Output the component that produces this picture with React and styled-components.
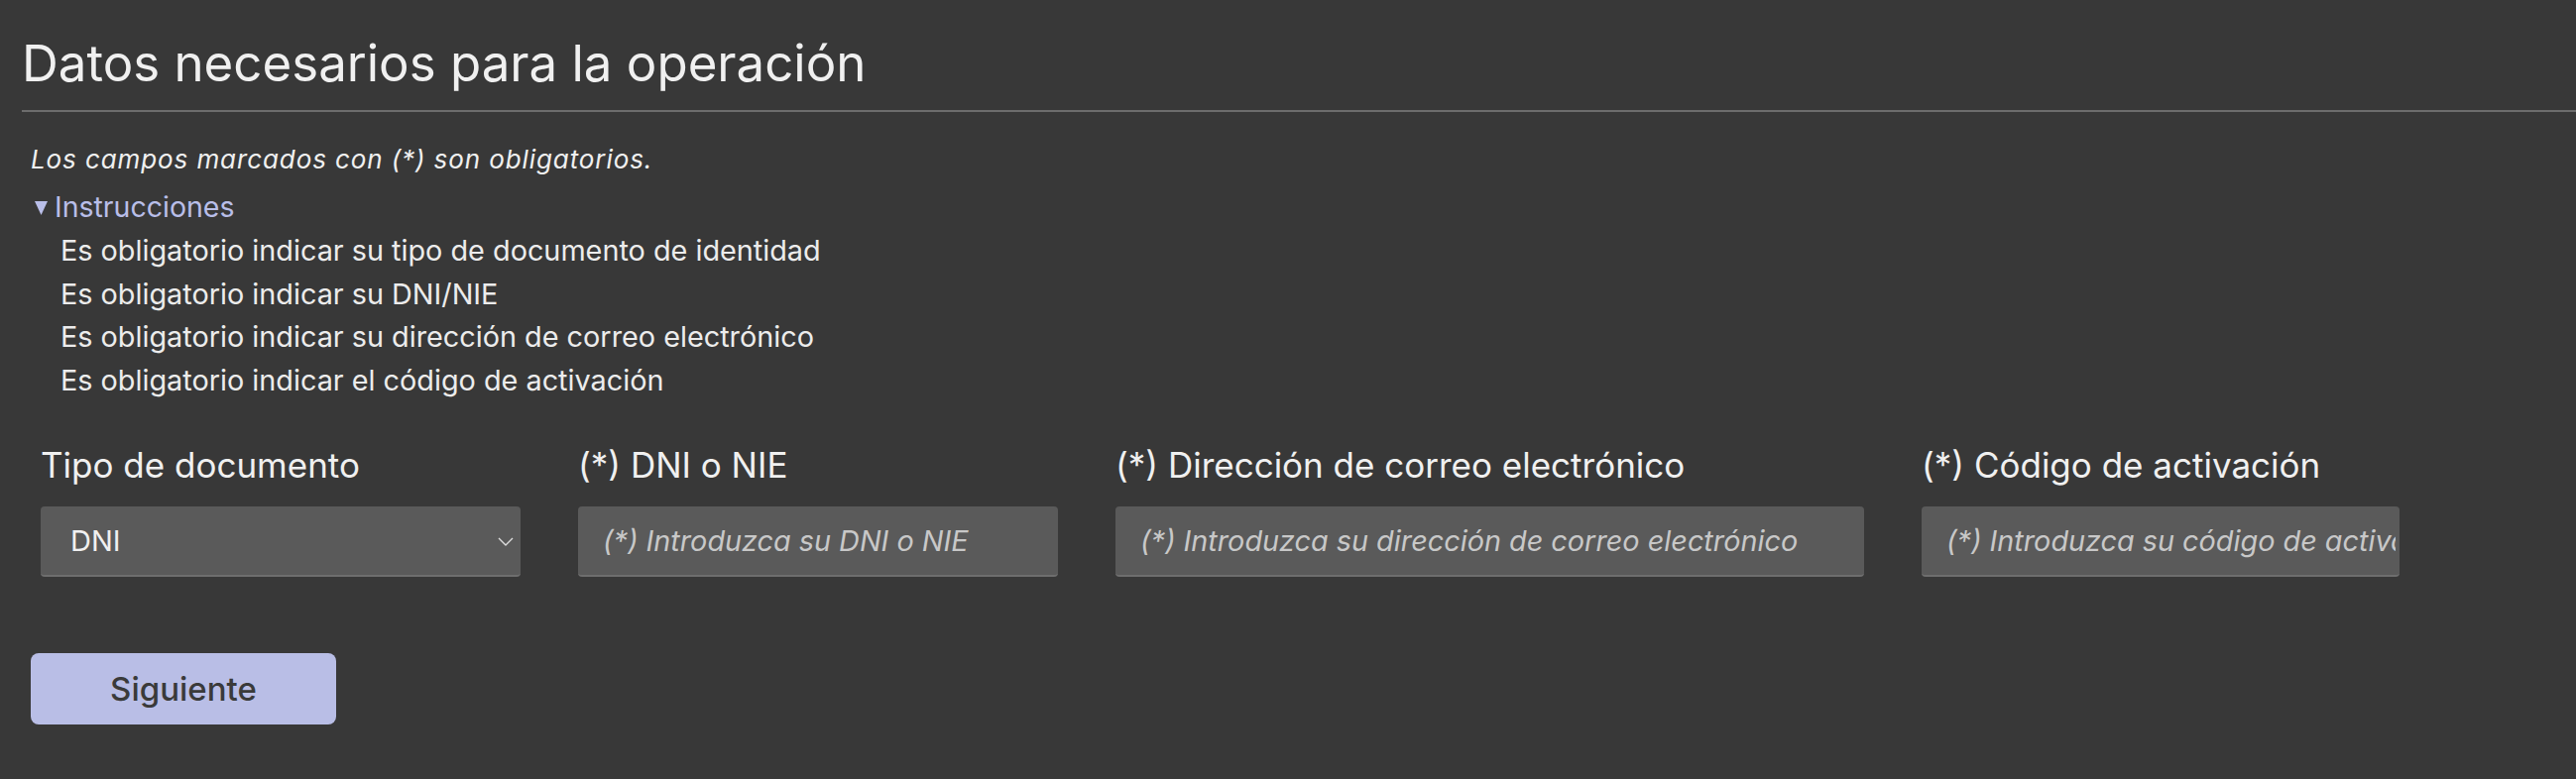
import React from 'react';
import styled, { createGlobalStyle } from 'styled-components';

const GlobalStyle = createGlobalStyle`
  html, body { margin: 0; padding: 0; background: #383838; }
  body { font-family: Inter, "Noto Sans", sans-serif; color: #f0f0f0; }
  * { box-sizing: border-box; }
`;

const Page = styled.main`
  min-height: 786px;
  padding: 33px 0 40px 22px;
`;

const Title = styled.h2`
  margin: 0;
  font-size: 51px;
  line-height: 62px;
  font-weight: 400;
  color: #f0f0f0;
`;

const Rule = styled.hr`
  margin: 16px 0 0 0;
  height: 2px;
  border: 0;
  background: #6c6c6c;
`;

const Body = styled.section`
  padding-left: 9px;
  display: flex;
  flex-direction: column;
  align-items: flex-start;
`;

const Note = styled.p`
  margin: 32px 0 0 0;
  font-size: 26px;
  line-height: 32px;
  font-style: italic;
  letter-spacing: 0.9px;
  color: #f0f0f0;
`;

const Details = styled.details`
  margin-top: 13px;
`;

const Summary = styled.summary`
  list-style: none;
  display: flex;
  align-items: center;
  gap: 7px;
  margin-left: 4px;
  font-size: 28.5px;
  line-height: 38px;
  color: #b9bee8;
  cursor: pointer;
  &::-webkit-details-marker { display: none; }
`;

const Marker = styled.svg`
  width: 13px;
  height: 14px;
  flex: none;
  margin-top: 2px;
`;

const List = styled.ul`
  list-style: none;
  margin: 3px 0 0 0;
  padding: 0 0 0 30px;
`;

const Item = styled.li`
  font-size: 28.8px;
  line-height: 43.5px;
  color: #ececec;
`;

const FieldRow = styled.div`
  display: flex;
  gap: 58px;
  margin: 41.5px 0 0 10px;
`;

const Field = styled.label`
  display: flex;
  flex-direction: column;
  width: ${(p) => p.$w}px;
`;

const LabelText = styled.span`
  font-size: 35px;
  line-height: 44px;
  color: #f0f0f0;
  margin-bottom: 20px;
  white-space: nowrap;
`;

const SelectWrap = styled.div`
  position: relative;
  width: 100%;
`;

const Select = styled.select`
  appearance: none;
  -webkit-appearance: none;
  width: 100%;
  height: 71px;
  padding: 0 40px 0 30px;
  border: 0;
  border-bottom: 2px solid #6e6e6e;
  border-radius: 4px;
  background: #5a5a5a;
  color: #f0f0f0;
  font-family: Inter, "Noto Sans", sans-serif;
  font-size: 29px;
  outline: none;
`;

const Chevron = styled.svg`
  position: absolute;
  right: 7px;
  top: 31px;
  width: 16px;
  height: 9px;
  pointer-events: none;
`;

const Input = styled.input`
  width: 100%;
  height: 71px;
  padding: 0 4px 0 25px;
  border: 0;
  border-bottom: 2px solid #6e6e6e;
  border-radius: 4px;
  background: #5a5a5a;
  color: #f0f0f0;
  font-family: Inter, "Noto Sans", sans-serif;
  font-size: 28.8px;
  outline: none;
  &::placeholder {
    color: #c8c8c8;
    font-style: italic;
    opacity: 1;
  }
`;

const Button = styled.button`
  margin-top: 77px;
  width: 308px;
  height: 72px;
  border: 0;
  border-radius: 8px;
  background: #b9bee6;
  color: #3a3a3a;
  font-family: Inter, "Noto Sans", sans-serif;
  font-size: 33px;
  font-weight: 500;
  cursor: pointer;
`;

const instructions = [
  'Es obligatorio indicar su tipo de documento de identidad',
  'Es obligatorio indicar su DNI/NIE',
  'Es obligatorio indicar su dirección de correo electrónico',
  'Es obligatorio indicar el código de activación',
];

const fields = [
  { label: '(*) DNI o NIE', placeholder: '(*) Introduzca su DNI o NIE', w: 484 },
  {
    label: '(*) Dirección de correo electrónico',
    placeholder: '(*) Introduzca su dirección de correo electrónico',
    w: 755,
  },
  { label: '(*) Código de activación', placeholder: '(*) Introduzca su código de activación', w: 482 },
];

export default function App() {
  return (
    <>
      <GlobalStyle />
      <Page>
        <Title>Datos necesarios para la operación</Title>
        <Rule />
        <Body>
          <Note>Los campos marcados con (*) son obligatorios.</Note>
          <Details open>
            <Summary>
              <Marker viewBox="0 0 13 14">
                <polygon points="0,0 13,0 6.5,14" fill="#b9bee8" />
              </Marker>
              Instrucciones
            </Summary>
            <List>
              {instructions.map((t) => (
                <Item key={t}>{t}</Item>
              ))}
            </List>
          </Details>
          <FieldRow>
            <Field $w={484}>
              <LabelText>Tipo de documento</LabelText>
              <SelectWrap>
                <Select defaultValue="DNI">
                  <option value="DNI">DNI</option>
                  <option value="NIE">NIE</option>
                </Select>
                <Chevron viewBox="0 0 16 9">
                  <polyline points="1,1 8,8 15,1" fill="none" stroke="#dcdcdc" strokeWidth="1.4" />
                </Chevron>
              </SelectWrap>
            </Field>
            {fields.map((f) => (
              <Field key={f.label} $w={f.w}>
                <LabelText>{f.label}</LabelText>
                <Input type="text" placeholder={f.placeholder} />
              </Field>
            ))}
          </FieldRow>
          <Button type="button">Siguiente</Button>
        </Body>
      </Page>
    </>
  );
}
